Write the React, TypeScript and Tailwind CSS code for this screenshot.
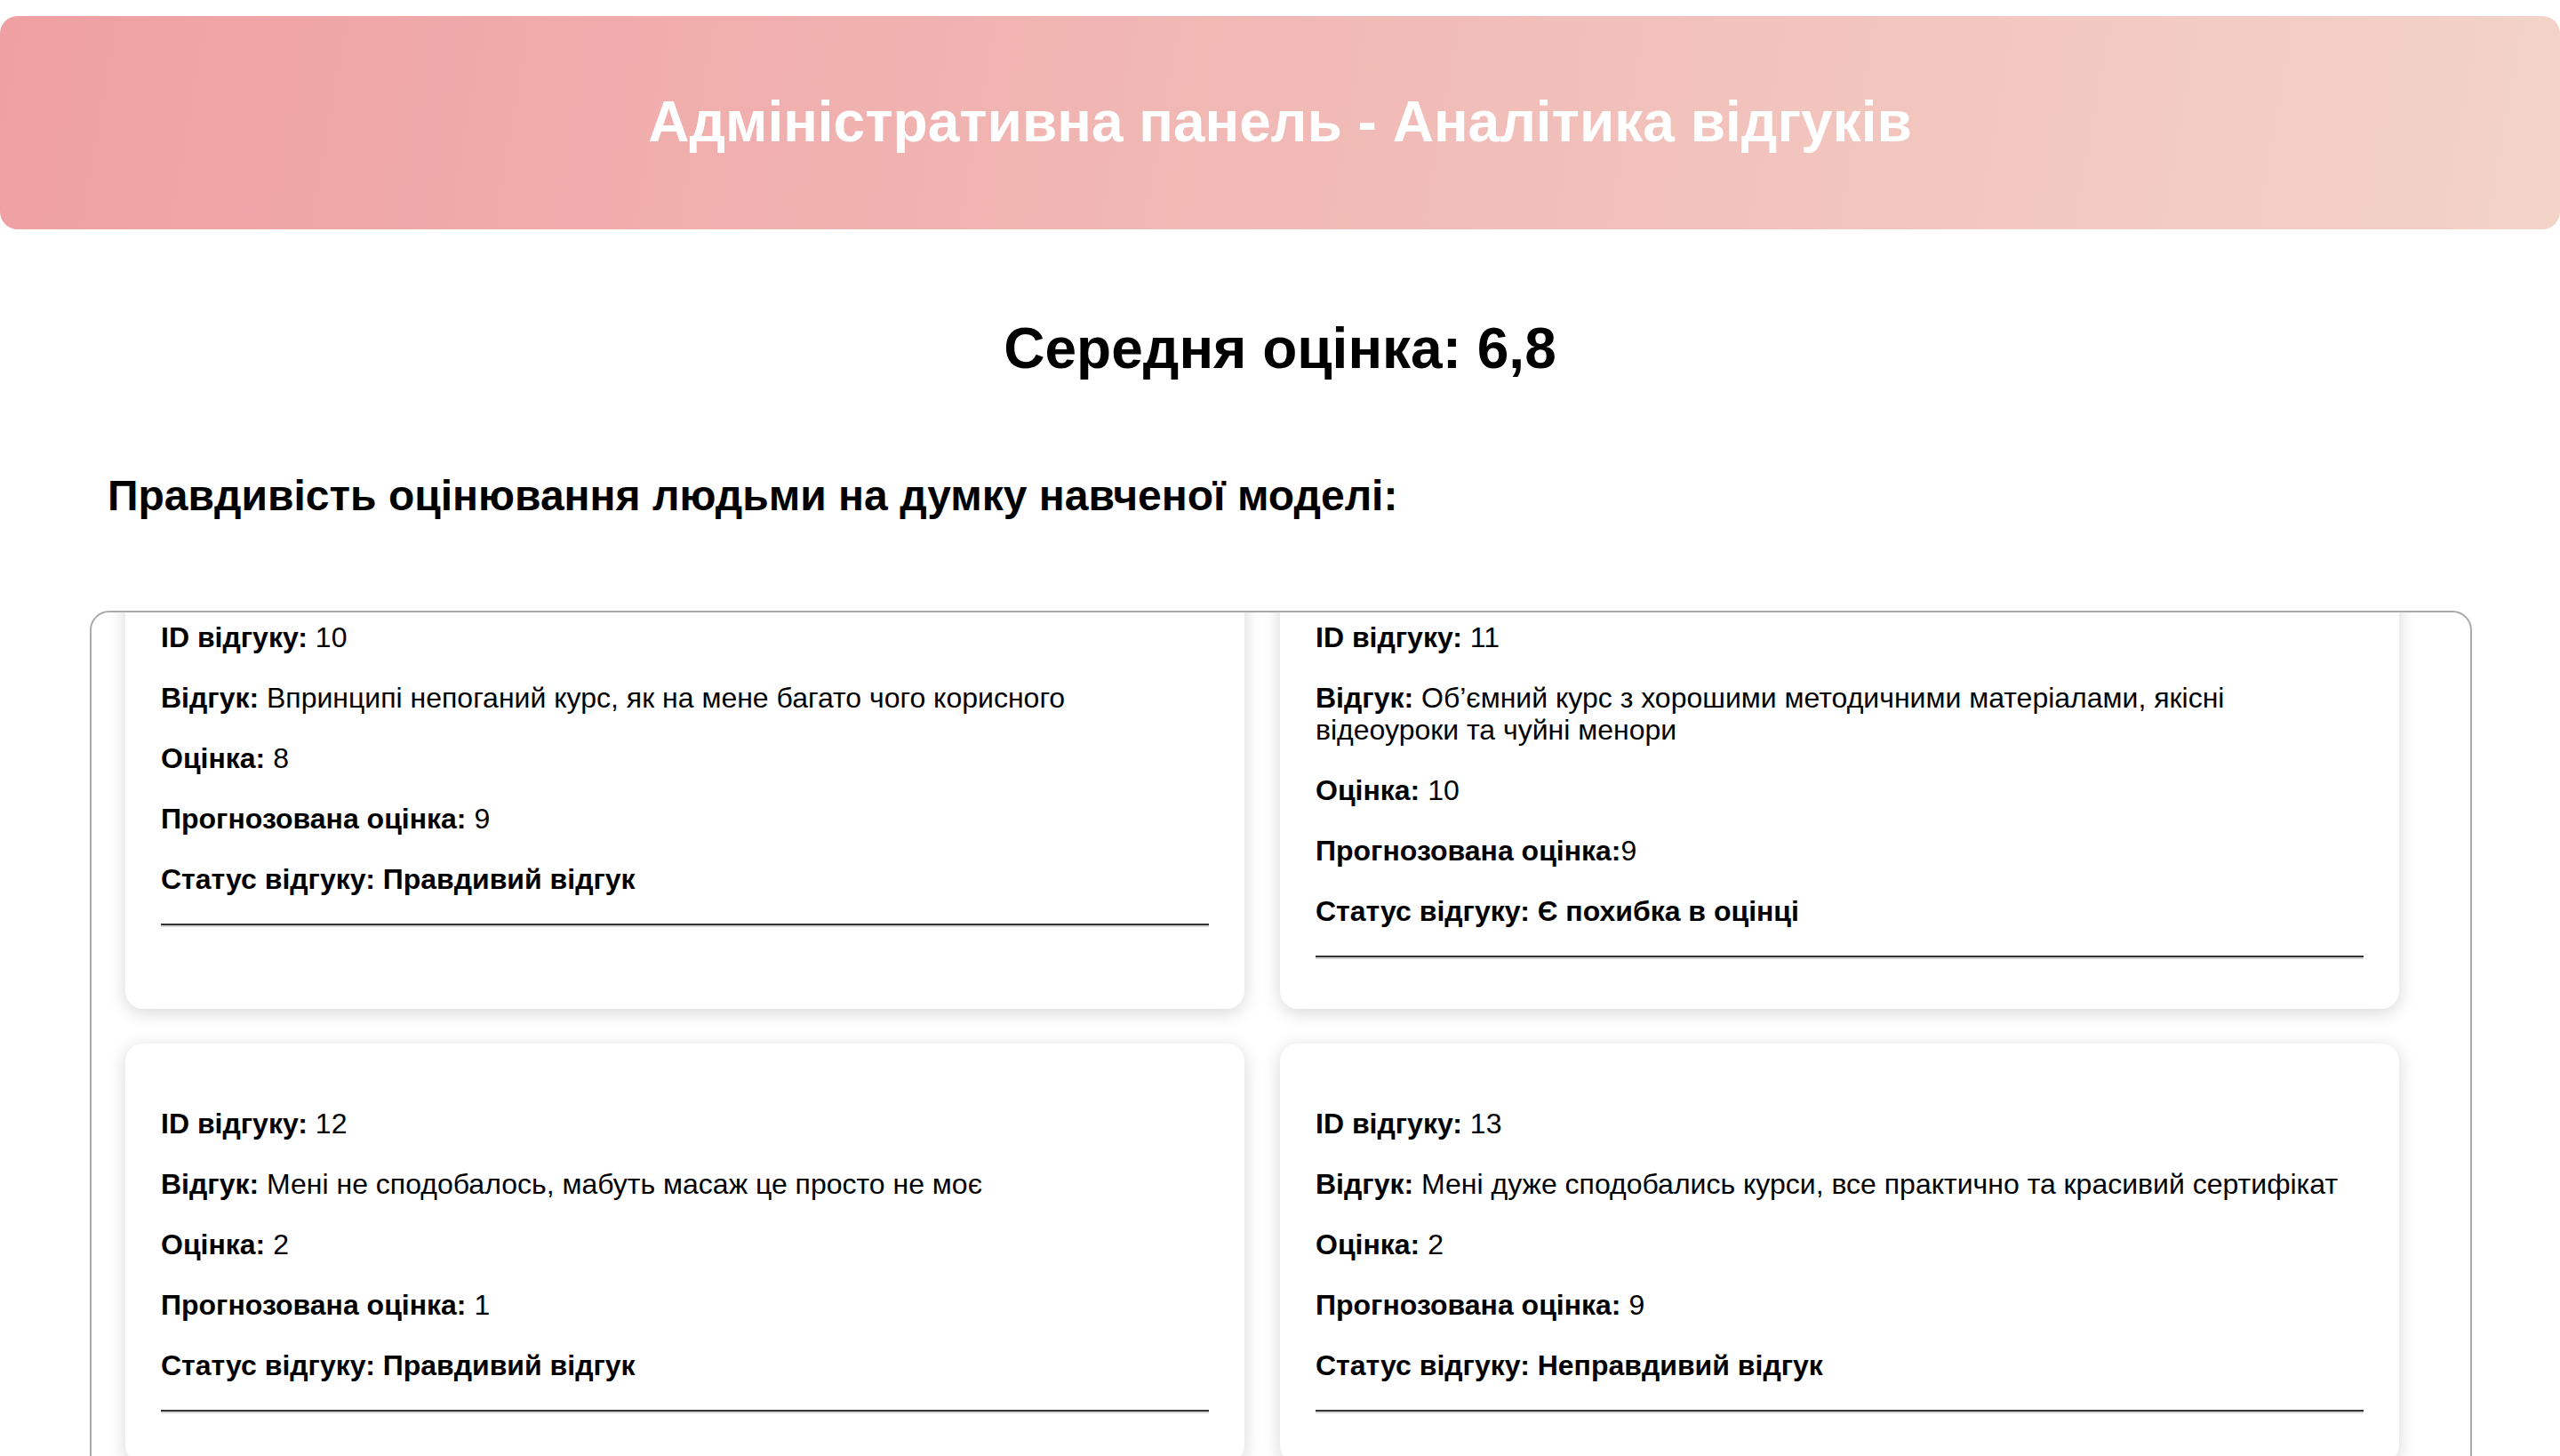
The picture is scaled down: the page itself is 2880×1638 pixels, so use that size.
import React from "react";

type Review = {
  id: number;
  text: string;
  score: string;
  pred: string;
  status: string;
};

const reviews: Review[] = [
  {
    id: 10,
    text: "Впринципі непоганий курс, як на мене багато чого корисного",
    score: "8",
    pred: " 9",
    status: "Правдивий відгук",
  },
  {
    id: 11,
    text: "Об’ємний курс з хорошими методичними матеріалами, якісні відеоуроки та чуйні менори",
    score: "10",
    pred: "9",
    status: "Є похибка в оцінці",
  },
  {
    id: 12,
    text: "Мені не сподобалось, мабуть масаж це просто не моє",
    score: "2",
    pred: " 1",
    status: "Правдивий відгук",
  },
  {
    id: 13,
    text: "Мені дуже сподобались курси, все практично та красивий сертифікат",
    score: "2",
    pred: " 9",
    status: "Неправдивий відгук",
  },
];

function Card({ r }: { r: Review }) {
  return (
    <div className="rounded-[20px] bg-white px-[40px] py-[40px] shadow-[0_4px_20px_rgba(0,0,0,0.16)]">
      <p className="my-[32px] text-[32px] leading-[36px]">
        <strong className="font-bold">ID відгуку:</strong> {r.id}
      </p>
      <p className="my-[32px] text-[32px] leading-[36px]">
        <strong className="font-bold">Відгук:</strong> {r.text}
      </p>
      <p className="my-[32px] text-[32px] leading-[36px]">
        <strong className="font-bold">Оцінка:</strong> {r.score}
      </p>
      <p className="my-[32px] text-[32px] leading-[36px]">
        <strong className="font-bold">Прогнозована оцінка:</strong>
        {r.pred}
      </p>
      <p className="my-[32px] text-[32px] font-bold leading-[36px]">
        Статус відгуку: {r.status}
      </p>
      <hr className="my-[16px] h-0 border-0 border-t-2 border-b-2 border-t-[#333333] border-b-[#d6d6d6]" />
    </div>
  );
}

export default function App() {
  return (
    <div className="h-screen overflow-hidden bg-white font-['Liberation_Sans',Arial,Helvetica,sans-serif] text-black">
      <header className="mt-[18px] flex h-[240px] items-center justify-center rounded-[20px] bg-[linear-gradient(100deg,#efa0a3_0%,#f3d3c8_100%)]">
        <h1 className="text-[64px] font-bold leading-[1.15] text-white">
          Адміністративна панель - Аналітика відгуків
        </h1>
      </header>

      <h2 className="mt-[98px] text-center text-[64px] font-bold leading-[1.15]">
        Середня оцінка: 6,8
      </h2>

      <h3 className="ml-[121px] mt-[100px] text-[48px] font-bold leading-[1.15]">
        Правдивість оцінювання людьми на думку навченої моделі:
      </h3>

      <div className="ml-[101px] mt-[102px] h-[1100px] w-[2680px] overflow-hidden rounded-[22px] border-2 border-[#aaaaaa] pl-[38px]">
        <div className="mt-[-62px] grid grid-cols-[1259px_1259px] gap-x-[40px] gap-y-[39px]">
          {reviews.map((r) => (
            <Card key={r.id} r={r} />
          ))}
        </div>
      </div>
    </div>
  );
}
